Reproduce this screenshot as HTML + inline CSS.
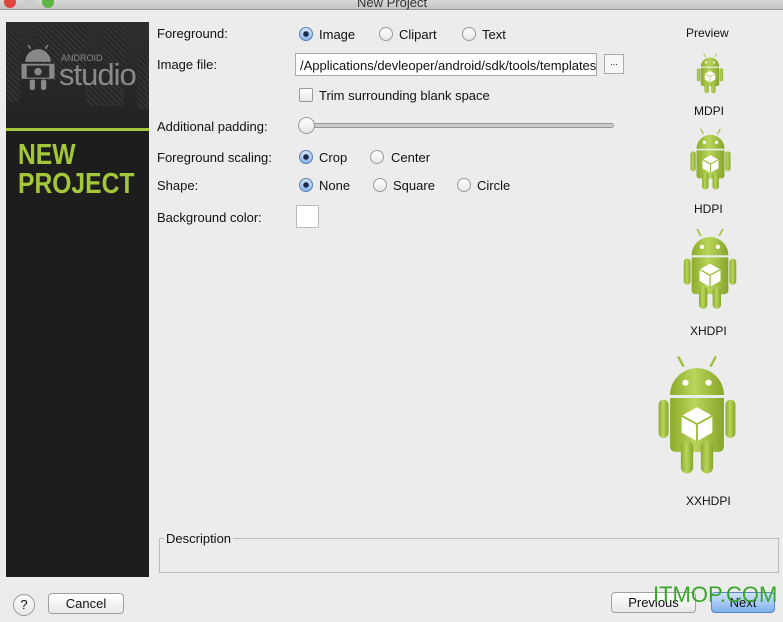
<!DOCTYPE html>
<html><head><meta charset="utf-8"><style>
*{margin:0;padding:0;box-sizing:border-box}
body{width:783px;height:622px;background:#ececec;font-family:"Liberation Sans",sans-serif;font-size:13px;color:#111;position:relative;overflow:hidden}
.a{position:absolute;white-space:nowrap}
.r{position:absolute;width:14px;height:14px;border-radius:50%;border:1px solid #9a9a9a;background:linear-gradient(#fff,#e6e6e6)}
.r.on{border-color:#5a7fae;background:radial-gradient(circle,#1a2a4a 0 2.5px,transparent 3px),linear-gradient(#d4e4f8,#8ab4ec)}
.btn{position:absolute;height:21px;border:1px solid #a0a0a0;border-radius:4px;background:linear-gradient(#fff,#e8e8e8);text-align:center;line-height:19px;font-size:13px}
</style></head><body>
<svg width="0" height="0" style="position:absolute"><defs>
<linearGradient id="g" x1="0" x2="1"><stop offset="0" stop-color="#8cab2c"/><stop offset=".45" stop-color="#b8d65a"/><stop offset="1" stop-color="#86a52a"/></linearGradient>
<symbol id="bot" viewBox="0 0 100 160">
<path d="M32 14 L26 3 M68 14 L74 3" stroke="#9cbf3a" stroke-width="3" stroke-linecap="round"/>
<path d="M15 52 A35 35 0 0 1 85 52 Z" fill="url(#g)"/>
<circle cx="35" cy="36" r="4" fill="#fff"/><circle cx="65" cy="36" r="4" fill="#fff"/>
<path d="M15 56 H85 V118 Q85 126 77 126 H23 Q15 126 15 118 Z" fill="url(#g)"/>
<rect x="0" y="58" width="13" height="50" rx="6.5" fill="url(#g)"/>
<rect x="87" y="58" width="13" height="50" rx="6.5" fill="url(#g)"/>
<rect x="29" y="112" width="16" height="42" rx="8" fill="url(#g)"/>
<rect x="55" y="112" width="16" height="42" rx="8" fill="url(#g)"/>
<path d="M50 68 L70 79 V101 L50 112 L30 101 V79 Z" fill="#fff"/>
<path d="M30 79 L50 90 L70 79 M50 90 V112" stroke="#9cbf3a" stroke-width="2.5" fill="none"/>
</symbol></defs></svg>
<div class="a" style="left:0;top:0;width:783px;height:10px;background:linear-gradient(#d8d8d8,#c4c4c4);border-bottom:1px solid #999"></div>
<div class="a" style="left:357px;top:-5px;font-size:13px;color:#333">New Project</div>
<div class="a" style="left:4px;top:-4px;width:12px;height:12px;border-radius:50%;background:#e0443e"></div>
<div class="a" style="left:23px;top:-4px;width:12px;height:12px;border-radius:50%;background:#ccc"></div>
<div class="a" style="left:42px;top:-4px;width:12px;height:12px;border-radius:50%;background:#5cb544"></div>

<div class="a" style="left:6px;top:22px;width:143px;height:555px;background:#1d1d1d"></div>
<div class="a" style="left:6px;top:22px;width:143px;height:107px;background:linear-gradient(#2e2e2e,#222)"></div>
<div class="a" style="left:37px;top:25px;width:50px;height:55px;background:repeating-linear-gradient(45deg,#333 0 2px,#262626 2px 4px);border-radius:3px"></div>
<div class="a" style="left:103px;top:25px;width:24px;height:40px;background:repeating-linear-gradient(45deg,#333 0 2px,#262626 2px 4px);border-radius:3px"></div>
<div class="a" style="left:86px;top:82px;width:38px;height:24px;background:repeating-linear-gradient(45deg,#333 0 2px,#262626 2px 4px);border-radius:3px"></div>
<div class="a" style="left:6px;top:32px;width:14px;height:70px;background:repeating-linear-gradient(45deg,#333 0 2px,#262626 2px 4px);border-radius:3px"></div>
<div class="a" style="left:137px;top:55px;width:12px;height:55px;background:repeating-linear-gradient(45deg,#333 0 2px,#262626 2px 4px);border-radius:3px"></div>
<svg class="a" style="left:19px;top:45px" width="38" height="45" viewBox="0 0 100 120"><path d="M30 10 L24 0 M70 10 L76 0" stroke="#888" stroke-width="4"/><path d="M16 45 A34 34 0 0 1 84 45Z" fill="#888"/><rect x="6" y="50" width="88" height="40" fill="#888"/><rect x="20" y="55" width="60" height="32" fill="#2a2a2a"/><circle cx="50" cy="71" r="10" fill="#888"/><rect x="28" y="92" width="14" height="28" rx="6" fill="#888"/><rect x="58" y="92" width="14" height="28" rx="6" fill="#888"/></svg>
<div class="a" style="left:61px;top:53px;font-size:9px;color:#8a8a8a">ANDROID</div>
<div class="a" style="left:59px;top:57px;font-size:31px;color:#8a8a8a;letter-spacing:-1px">studio</div>
<div class="a" style="left:6px;top:128px;width:143px;height:3px;background:#a4c639"></div>
<div class="a" style="left:18px;top:141px;font-size:29px;font-weight:bold;color:#a4c639;line-height:29px;transform:scaleX(.85);transform-origin:left">NEW<br>PROJECT</div>

<div class="a" style="left:157px;top:26px">Foreground:</div>
<div class="r on" style="left:299px;top:27px"></div><div class="a" style="left:319px;top:27px">Image</div>
<div class="r" style="left:379px;top:27px"></div><div class="a" style="left:399px;top:27px">Clipart</div>
<div class="r" style="left:462px;top:27px"></div><div class="a" style="left:482px;top:27px">Text</div>
<div class="a" style="left:157px;top:57px">Image file:</div>
<div class="a" style="left:295px;top:53px;width:302px;height:23px;background:#fff;border:1px solid #aaa;padding:4px 4px;overflow:hidden;font-size:13px">/Applications/devleoper/android/sdk/tools/templates</div>
<div class="a" style="left:604px;top:54px;width:20px;height:20px;background:#f6f6f6;border:1px solid #aaa;font-size:9px;text-align:center;line-height:14px">...</div>
<div class="a" style="left:299px;top:88px;width:14px;height:14px;border:1px solid #999;border-radius:2px;background:linear-gradient(#fff,#e8e8e8)"></div>
<div class="a" style="left:319px;top:88px">Trim surrounding blank space</div>
<div class="a" style="left:157px;top:119px">Additional padding:</div>
<div class="a" style="left:304px;top:123px;width:310px;height:5px;border-radius:3px;background:#ccc;border:1px solid #999"></div>
<div class="r" style="left:298px;top:117px;width:17px;height:17px"></div>
<div class="a" style="left:157px;top:150px">Foreground scaling:</div>
<div class="r on" style="left:299px;top:150px"></div><div class="a" style="left:319px;top:150px">Crop</div>
<div class="r" style="left:370px;top:150px"></div><div class="a" style="left:391px;top:150px">Center</div>
<div class="a" style="left:157px;top:178px">Shape:</div>
<div class="r on" style="left:299px;top:178px"></div><div class="a" style="left:319px;top:178px">None</div>
<div class="r" style="left:373px;top:178px"></div><div class="a" style="left:393px;top:178px">Square</div>
<div class="r" style="left:457px;top:178px"></div><div class="a" style="left:477px;top:178px">Circle</div>
<div class="a" style="left:157px;top:210px">Background color:</div>
<div class="a" style="left:296px;top:205px;width:23px;height:23px;background:#fff;border:1px solid #bbb"></div>

<div class="a" style="left:686px;top:26px;font-size:12px">Preview</div>
<svg class="a" style="left:692px;top:53px" width="36" height="42"><use href="#bot"/></svg>
<div class="a" style="left:694px;top:104px;font-size:12px">MDPI</div>
<svg class="a" style="left:683px;top:128px" width="55" height="64"><use href="#bot"/></svg>
<div class="a" style="left:694px;top:202px;font-size:12px">HDPI</div>
<svg class="a" style="left:675px;top:228px" width="70" height="84"><use href="#bot"/></svg>
<div class="a" style="left:690px;top:324px;font-size:12px">XHDPI</div>
<svg class="a" style="left:657px;top:355px" width="80" height="123"><use href="#bot"/></svg>
<div class="a" style="left:686px;top:494px;font-size:12px">XXHDPI</div>

<div class="a" style="left:159px;top:538px;width:620px;height:35px;border:1px solid #bbb"></div>
<div class="a" style="left:164px;top:531px;background:#ececec;padding:0 2px">Description</div>

<div class="a" style="left:13px;top:594px;width:22px;height:22px;border-radius:50%;border:1px solid #999;background:linear-gradient(#fff,#e6e6e6);text-align:center;line-height:20px;font-size:13px">?</div>
<div class="btn" style="left:48px;top:593px;width:76px">Cancel</div>
<div class="btn" style="left:611px;top:592px;width:85px">Previous</div>
<div class="btn" style="left:711px;top:592px;width:64px;border-color:#5a86c4;background:linear-gradient(#cfe2fb,#7fb0ee)">Next</div>
<div class="a" style="left:653px;top:582px;font-size:22px;color:#3aa52a">ITMOP.COM</div>
</body></html>
